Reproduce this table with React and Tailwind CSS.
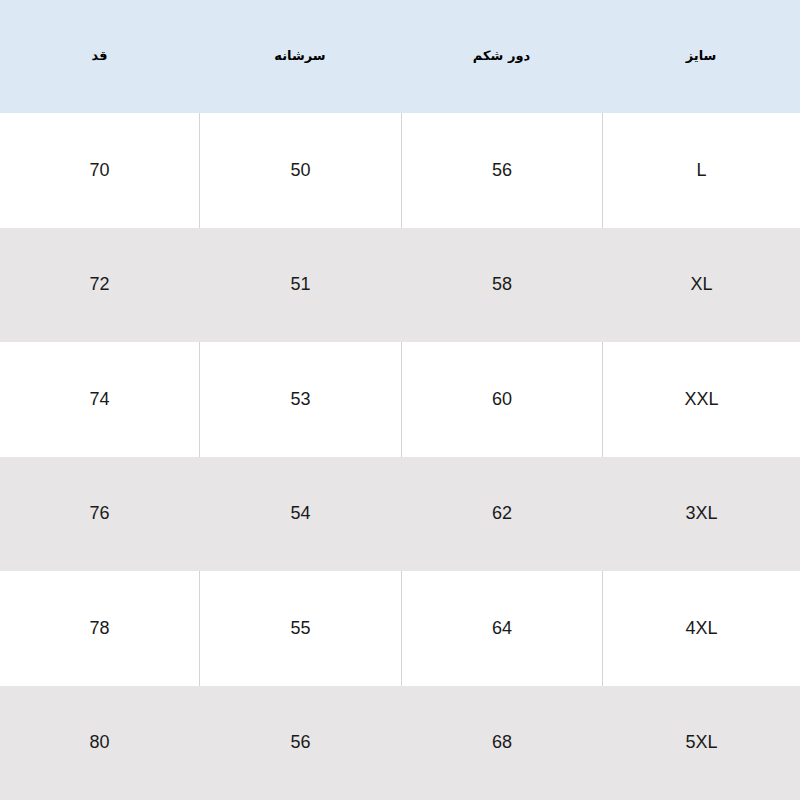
import React from 'react'

const rows = [
    ['L', '56', '50', '70'],
    ['XL', '58', '51', '72'],
    ['XXL', '60', '53', '74'],
    ['3XL', '62', '54', '76'],
    ['4XL', '64', '55', '78'],
    ['5XL', '68', '56', '80'],
]

const headers = ['سایز', 'دور شکم', 'سرشانه', 'قد']

const App = () => {
    return (
        <div dir="rtl" className="w-[800px] h-[800px] bg-white overflow-hidden">
            <div className="grid grid-cols-[198px_201px_202px_199px] h-[113px] bg-[#dce9f5]">
                {headers.map((h) => (
                    <div
                        key={h}
                        className="flex items-center justify-center pb-[2px] text-[13px] font-bold text-black"
                        style={{ fontFamily: '"DejaVu Sans", sans-serif' }}
                    >
                        {h}
                    </div>
                ))}
            </div>
            {rows.map((row, i) => (
                <div
                    key={row[0]}
                    className={`grid grid-cols-[198px_201px_202px_199px] h-[114.5px] ${i % 2 === 1 ? 'bg-[#e7e5e5]' : 'bg-white'}`}
                >
                    {row.map((cell, j) => (
                        <div
                            key={j}
                            className={`flex items-center justify-center text-[18px] text-[#1a1a1a] font-['Liberation_Sans',sans-serif] ${
                                j < 3 ? (i % 2 === 1 ? 'border-l border-[#e7e5e5]' : 'border-l border-[#d4d4d4]') : ''
                            }`}
                        >
                            {cell}
                        </div>
                    ))}
                </div>
            ))}
        </div>
    )
}

export default App
